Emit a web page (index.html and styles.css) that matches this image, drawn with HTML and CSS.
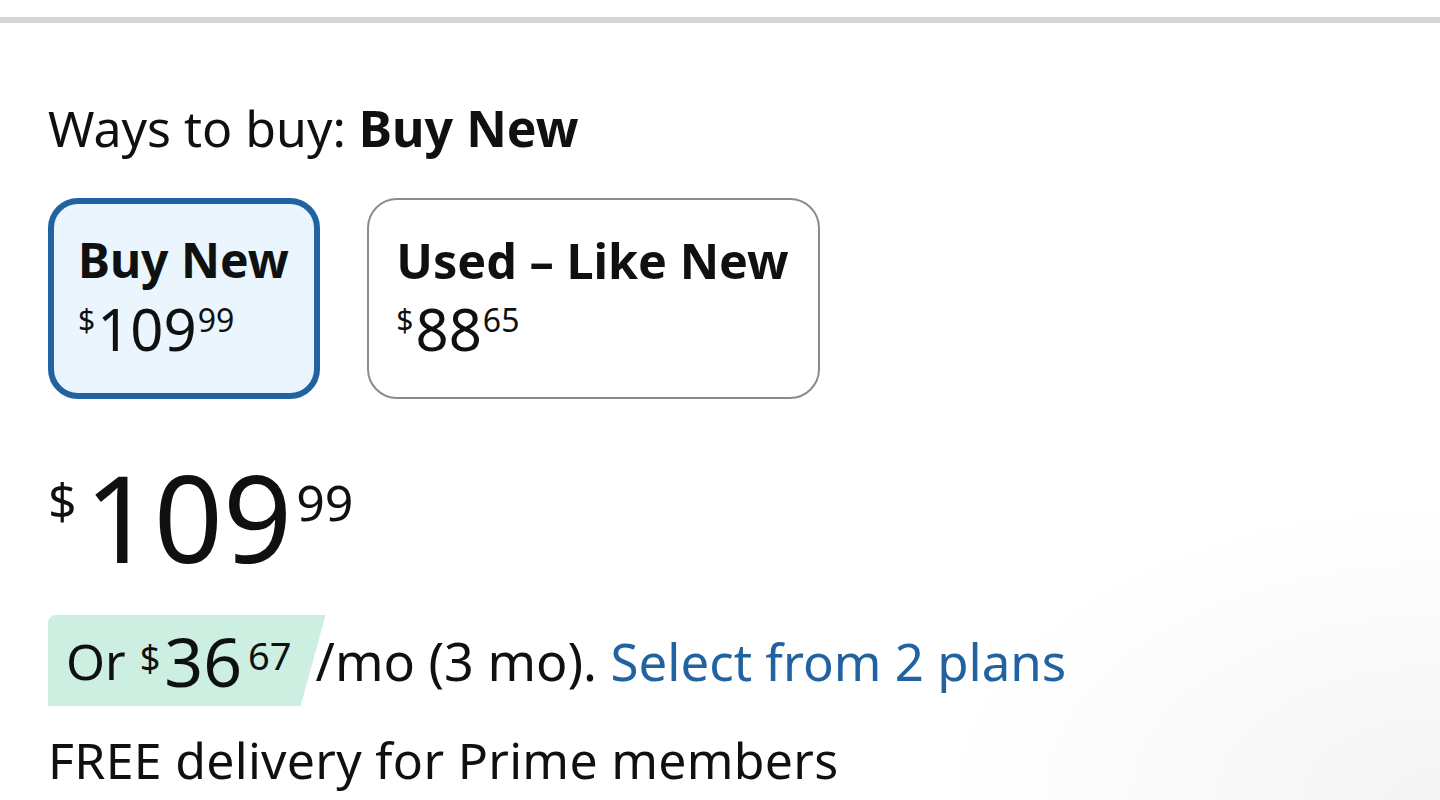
FILE: index.html
```html
<!DOCTYPE html>
<html lang="en">
<head>
<meta charset="utf-8">
<title>Ways to buy</title>
<link rel="stylesheet" href="styles.css">
</head>
<body>
<div class="page">
  <div class="divider"></div>
  <div class="content">
    <div class="ways">Ways to buy: <b>Buy New</b></div>
    <div class="options">
      <div class="option selected">
        <div class="opt-title">Buy New</div>
        <div class="opt-price"><span class="sym">$</span>109<span class="frac">99</span></div>
      </div>
      <div class="option">
        <div class="opt-title">Used – Like New</div>
        <div class="opt-price"><span class="sym">$</span>88<span class="frac">65</span></div>
      </div>
    </div>
    <div class="price"><span class="sym">$</span><span class="whole">109</span><span class="frac">99</span></div>
    <div class="monthly">
      <span class="badge">Or <span class="sym">$</span><span class="whole">36</span><span class="frac">67</span></span>
      <span class="mo">/mo (3 mo). <a class="link" href="#">Select from 2 plans</a></span>
    </div>
    <div class="delivery">FREE delivery for Prime members</div>
  </div>
</div>
</body>
</html>
```

FILE: styles.css
```css
html, body {
  margin: 0;
  padding: 0;
  background: #fff;
}
body {
  font-family: "Noto Sans", "Open Sans", sans-serif;
  color: #0f1111;
  width: 1440px;
  height: 800px;
  overflow: hidden;
}
.page {
  width: 1440px;
  height: 800px;
  background: radial-gradient(ellipse 500px 300px at 1440px 800px, #f4f4f4 0%, #fff 100%);
}
.divider {
  height: 17px;
  border-bottom: 6px solid #d5d5d5;
}
.content {
  padding-left: 48px;
  display: flex;
  flex-direction: column;
}
.ways {
  font-size: 50px;
  line-height: 60px;
  margin-top: 75px;
}
.ways b { font-weight: 700; }
.options {
  display: flex;
  gap: 47px;
  margin-top: 40px;
}
.option {
  box-sizing: border-box;
  height: 201px;
  border: 2.5px solid #888c8c;
  border-radius: 30px;
  padding: 30px 29px 0 27.5px;
  background: #fff;
}
.option.selected {
  border: 6px solid #2162a1;
  background: #eaf5fe;
  padding: 26px 25px 0 24px;
}
.opt-title {
  font-size: 48.5px;
  font-weight: 700;
  line-height: 60px;
}
.selected .opt-title {
  font-size: 48px;
}
.opt-price {
  font-size: 58px;
  line-height: 64px;
  margin-top: -2px;
}
.opt-price .sym {
  font-size: 30px;
  vertical-align: 20px;
  margin-right: 2px;
}
.opt-price .frac {
  font-size: 32px;
  vertical-align: 19px;
  margin-left: 1px;
}
.price {
  margin-top: 46px;
  line-height: 110px;
  height: 110px;
}
.price .sym {
  font-size: 50px;
  vertical-align: 44px;
  margin-right: 8px;
}
.price .whole {
  font-size: 121px;
}
.price .frac {
  font-size: 50px;
  vertical-align: 42px;
  margin-left: 4px;
}
.monthly {
  margin-top: 60px;
  display: flex;
  align-items: center;
  height: 91px;
}
.badge {
  height: 91px;
  display: flex;
  align-items: center;
  padding: 0 34px 0 18px;
  background: #ccefe1;
  clip-path: polygon(0 0, 100% 0, 91% 100%, 0 100%);
  border-top-left-radius: 8px;
  font-size: 50px;
}
.badge .sym {
  font-size: 36px;
  align-self: flex-start;
  margin-top: 18px;
  margin-left: 14px;
}
.badge .whole {
  font-size: 68px;
  margin-left: 4px;
}
.badge .frac {
  font-size: 38px;
  align-self: flex-start;
  margin-top: 14px;
  margin-left: 6px;
}
.mo {
  font-size: 52px;
  margin-left: -10px;
}
.link {
  color: #2162a1;
  text-decoration: none;
  font-size: 51px;
}
.delivery {
  font-size: 50px;
  line-height: 60px;
  margin-top: 24px;
  letter-spacing: 0.3px;
}
```
